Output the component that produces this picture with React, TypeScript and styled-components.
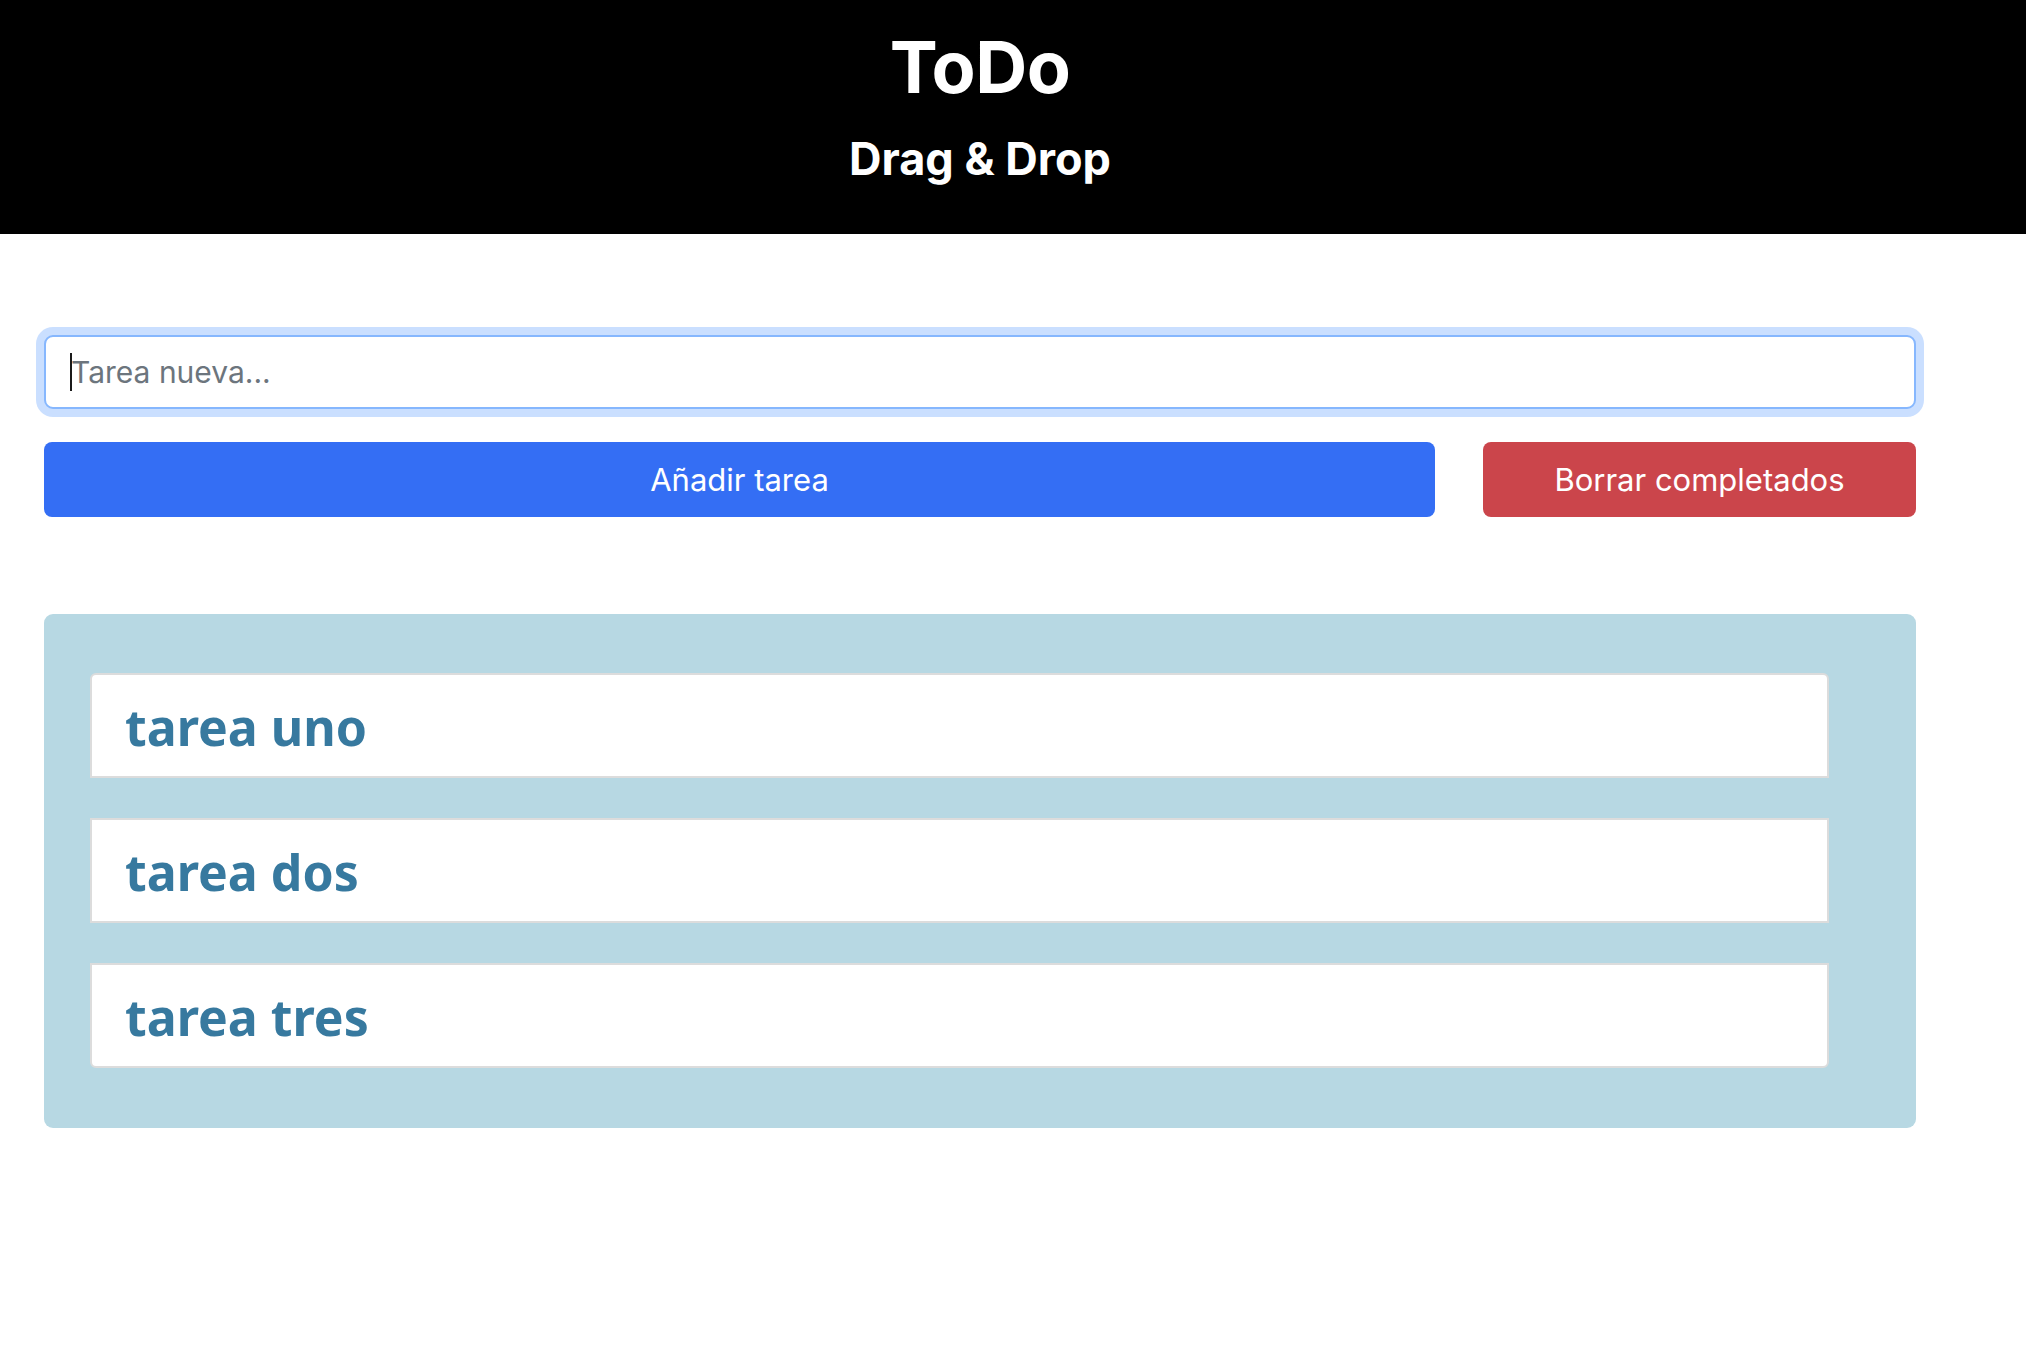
import React from "react";
import styled, { createGlobalStyle } from "styled-components";

const Global = createGlobalStyle`
  html, body { margin: 0; padding: 0; background: #ffffff; }
  body { font-family: Inter, "Noto Sans", sans-serif; }
  * { box-sizing: border-box; }
`;

const Header = styled.header`
  background: #000000;
  height: 234px;
  color: #ffffff;
  display: flex;
  flex-direction: column;
  align-items: center;
  padding-top: 22px;
  padding-right: 66px;
`;

const Title = styled.h1`
  margin: 0;
  font-family: Inter, sans-serif;
  font-weight: 700;
  font-size: 72px;
  line-height: 90px;
  letter-spacing: -0.5px;
`;

const Subtitle = styled.h2`
  margin: 0;
  margin-top: 19px;
  font-family: Inter, sans-serif;
  font-weight: 700;
  font-size: 45px;
  line-height: 56px;
`;

const Main = styled.main`
  width: 1872px;
  margin-left: 44px;
  padding-top: 101px;
`;

const InputWrap = styled.div`
  position: relative;
  &::after {
    content: "";
    position: absolute;
    left: 26px;
    top: 18px;
    width: 2px;
    height: 38px;
    background: #1a1a1a;
    pointer-events: none;
  }
`;

const Input = styled.input`
  display: block;
  width: 100%;
  height: 74px;
  padding: 0 20px 0 25px;
  font-family: Inter, sans-serif;
  font-size: 30px;
  color: #212529;
  border: 2px solid #86b7fe;
  border-radius: 9px;
  box-shadow: 0 0 0 8px rgba(13, 110, 253, 0.22);
  outline: none;
  caret-color: transparent;
  &::placeholder { color: #6c757d; }
`;

const ButtonRow = styled.div`
  display: grid;
  grid-template-columns: 1fr 433px;
  gap: 48px;
  margin-top: 33px;
`;

const Button = styled.button<{ $variant: "primary" | "danger" }>`
  height: 75px;
  border: none;
  border-radius: 8px;
  color: #ffffff;
  font-family: Inter, sans-serif;
  font-size: 31px;
  background: ${(p) => (p.$variant === "primary" ? "#346ef4" : "#cb454b")};
  cursor: pointer;
`;

const Board = styled.section`
  margin-top: 97px;
  background: #b7d8e3;
  border-radius: 9px;
  padding: 59px 87px 60px 46px;
  display: flex;
  flex-direction: column;
  gap: 40px;
`;

const Card = styled.div<{ $first?: boolean; $last?: boolean }>`
  height: 105px;
  background: #ffffff;
  border: 2px solid #dcdcdc;
  border-radius: ${(p) => (p.$first ? "6px 6px 0 0" : p.$last ? "0 0 6px 6px" : "0")};
  display: flex;
  align-items: center;
  padding-left: 33px;
`;

const CardText = styled.span`
  font-family: "Noto Sans", sans-serif;
  font-weight: 700;
  font-size: 50px;
  color: #37799f;
  line-height: 1;
  padding-top: 2px;
`;

const tasks = ["tarea uno", "tarea dos", "tarea tres"];

export default function App() {
  return (
    <>
      <Global />
      <Header>
        <Title>ToDo</Title>
        <Subtitle>Drag &amp; Drop</Subtitle>
      </Header>
      <Main>
        <InputWrap>
          <Input placeholder="Tarea nueva..." />
        </InputWrap>
        <ButtonRow>
          <Button $variant="primary">Añadir tarea</Button>
          <Button $variant="danger">Borrar completados</Button>
        </ButtonRow>
        <Board>
          {tasks.map((t, i) => (
            <Card key={t} $first={i === 0} $last={i === tasks.length - 1}>
              <CardText>{t}</CardText>
            </Card>
          ))}
        </Board>
      </Main>
    </>
  );
}
